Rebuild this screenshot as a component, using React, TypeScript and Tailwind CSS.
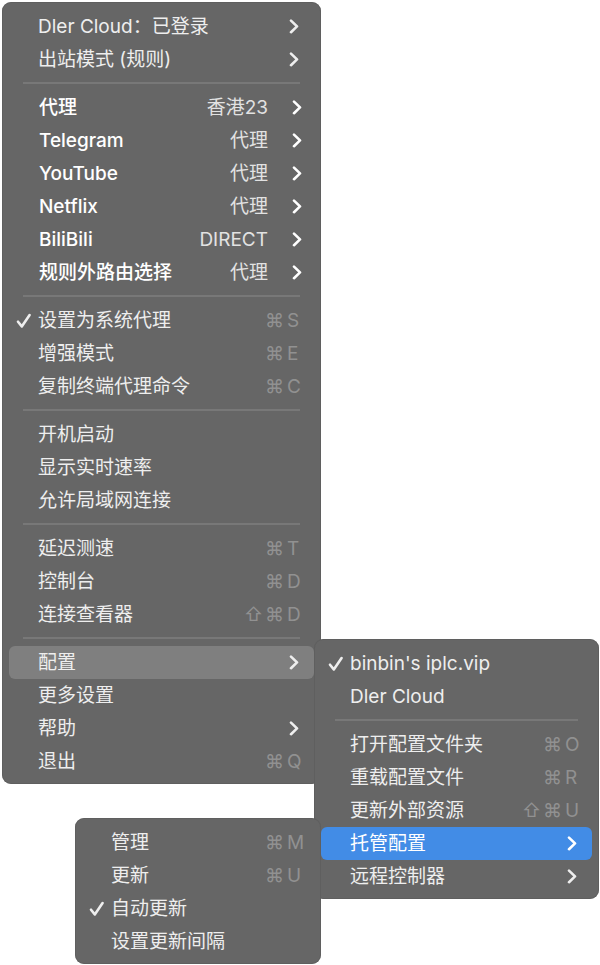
import type { ReactNode } from "react";
import clsx from "clsx";

type Entry = {
  label: string;
  keys?: string;
  value?: string;
  group?: boolean;
  checked?: boolean;
  arrow?: boolean;
  highlight?: "gray" | "blue";
  submenu?: ReactNode;
};

const updateMenu: Entry[][] = [
  [
    { label: "管理", keys: "⌘M" },
    { label: "更新", keys: "⌘U" },
    { label: "自动更新", checked: true },
    { label: "设置更新间隔" },
  ],
];

const configMenu: Entry[][] = [
  [{ label: "binbin's iplc.vip", checked: true }, { label: "Dler Cloud" }],
  [
    { label: "打开配置文件夹", keys: "⌘O" },
    { label: "重载配置文件", keys: "⌘R" },
    { label: "更新外部资源", keys: "⇧⌘U" },
    {
      label: "托管配置",
      arrow: true,
      highlight: "blue",
      submenu: (
        <Menu
          label="托管配置"
          sections={updateMenu}
          className="absolute -top-[9px] -left-[239px] z-20 w-[246px]"
        />
      ),
    },
    { label: "远程控制器", arrow: true },
  ],
];

const mainMenu: Entry[][] = [
  [
    { label: "Dler Cloud：已登录", arrow: true },
    { label: "出站模式 (规则)", arrow: true },
  ],
  [
    { label: "代理", value: "香港23", group: true, arrow: true },
    { label: "Telegram", value: "代理", group: true, arrow: true },
    { label: "YouTube", value: "代理", group: true, arrow: true },
    { label: "Netflix", value: "代理", group: true, arrow: true },
    { label: "BiliBili", value: "DIRECT", group: true, arrow: true },
    { label: "规则外路由选择", value: "代理", group: true, arrow: true },
  ],
  [
    { label: "设置为系统代理", keys: "⌘S", checked: true },
    { label: "增强模式", keys: "⌘E" },
    { label: "复制终端代理命令", keys: "⌘C" },
  ],
  [{ label: "开机启动" }, { label: "显示实时速率" }, { label: "允许局域网连接" }],
  [
    { label: "延迟测速", keys: "⌘T" },
    { label: "控制台", keys: "⌘D" },
    { label: "连接查看器", keys: "⇧⌘D" },
  ],
  [
    {
      label: "配置",
      arrow: true,
      highlight: "gray",
      submenu: (
        <Menu
          label="配置"
          sections={configMenu}
          className="absolute -top-[7px] left-[312px] z-10 w-[285px]"
        />
      ),
    },
    { label: "更多设置" },
    { label: "帮助", arrow: true },
    { label: "退出", keys: "⌘Q" },
  ],
];

function Check() {
  return (
    <svg viewBox="0 0 16 16" className="h-4 w-4" fill="none" stroke="currentColor" strokeWidth="2.6" strokeLinecap="round" strokeLinejoin="round" aria-hidden="true">
      <path d="M2 8.7 5.8 13.4 13.6 2" />
    </svg>
  );
}

function Chevron() {
  return (
    <svg viewBox="0 0 10 16" className="h-4 w-[10px]" fill="none" stroke="currentColor" strokeWidth="2.6" strokeLinecap="round" strokeLinejoin="round" aria-hidden="true">
      <path d="M2 1.6 8 7.4 2 13.2" />
    </svg>
  );
}

function Shortcut({ keys }: { keys: string }) {
  return (
    <kbd className="flex font-[inherit] text-[#919191]">
      {[...keys].map((key) => (
        <span key={key} className={key === "⌘" || key === "⇧" ? "w-[21px] text-center" : "w-[18px] pl-[2px]"}>
          {key}
        </span>
      ))}
    </kbd>
  );
}

function MenuItem({ entry }: { entry: Entry }) {
  const { label, keys, value, group, checked, arrow, highlight, submenu } = entry;
  return (
    <li className="relative px-[7px]">
      <button
        type="button"
        className={clsx(
          "flex h-[33px] w-full items-center rounded-[6px] pl-[7px] text-left",
          group ? "pr-3" : keys ? "pr-[11px]" : "pr-[15px]",
          highlight === "gray" && "bg-[#7f7f7f]",
          highlight === "blue" && "bg-[#428ce6] text-white",
          group && "text-white",
        )}
      >
        <span className={clsx("shrink-0", group ? "w-[23px]" : "w-[22px]")}>{checked && <Check />}</span>
        <span className={clsx("grow whitespace-nowrap", group && "font-medium")}>{label}</span>
        {value && <span className="mr-6 text-[#e2e2e2]">{value}</span>}
        {keys && <Shortcut keys={keys} />}
        {arrow && <Chevron />}
      </button>
      {submenu}
    </li>
  );
}

function Menu({ label, sections, className }: { label: string; sections: Entry[][]; className: string }) {
  return (
    <nav
      aria-label={label}
      className={clsx(
        "rounded-[9px] bg-[#666666] pt-2 pb-[6px] text-[19px] leading-[33px] text-[#eeeeee] ring-1 ring-[#5a5a5a]/60 ring-inset",
        className,
      )}
    >
      {sections.map((section, index) => (
        <div key={index}>
          {index > 0 && <hr className="mx-[21px] mt-[6px] mb-[7px] border-t-2 border-[#787878]" />}
          <ul>
            {section.map((entry) => (
              <MenuItem key={entry.label} entry={entry} />
            ))}
          </ul>
        </div>
      ))}
    </nav>
  );
}

export default function App() {
  return (
    <main className="min-h-screen bg-white p-[2px] font-[Inter,'Noto_Sans_CJK_SC',sans-serif]">
      <Menu label="Dler Cloud" sections={mainMenu} className="relative w-[319px]" />
    </main>
  );
}
